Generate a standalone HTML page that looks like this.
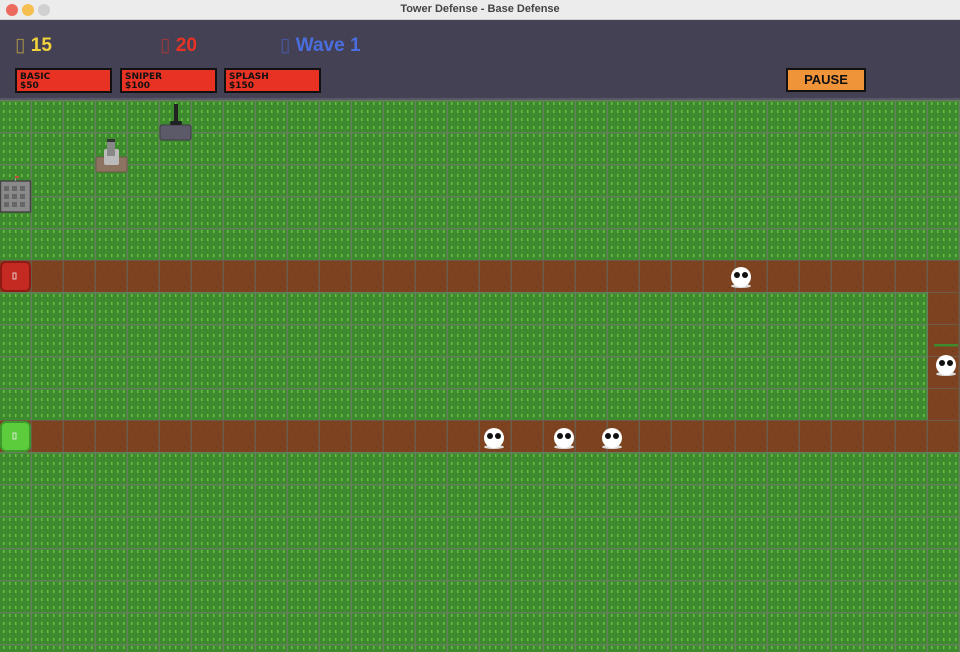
<!DOCTYPE html>
<html><head><meta charset="utf-8"><style>
*{margin:0;padding:0;box-sizing:border-box}
body{width:960px;height:652px;overflow:hidden;background:#3e8a2e;font-family:"Liberation Sans",sans-serif;position:relative}
.tb{position:absolute;left:0;top:0;width:960px;height:20px;background:#ececec;border-bottom:1px solid #d0d0d0;text-align:center;font-size:11px;font-weight:bold;color:#444;line-height:18px}
.dot{position:absolute;top:4px;width:12px;height:12px;border-radius:50%}
.hd{position:absolute;left:0;top:20px;width:960px;height:80px;background:#444154;border-bottom:2px solid #5a5868}
.st{position:absolute;top:14px;font-size:19px;font-weight:bold}
.st i{font-style:normal;opacity:.55;font-weight:normal}
.btn{position:absolute;top:48px;width:97px;height:25px;background:#e83224;border:2px solid #111;font-size:9px;font-weight:bold;line-height:9px;padding:3px 0 0 3px;color:#111;font-family:"DejaVu Sans",sans-serif}
.pause{position:absolute;left:786px;top:48px;width:80px;height:24px;background:#f0943a;border:2px solid #111;font-size:13px;font-weight:bold;text-align:center;line-height:19px;color:#111}
svg{position:absolute;left:0;top:100px}
</style></head><body>
<div class="tb">Tower Defense - Base Defense</div>
<div class="dot" style="left:6px;background:#ed6a5e"></div>
<div class="dot" style="left:22px;background:#f5bf4f"></div>
<div class="dot" style="left:38px;background:#d0d0d0"></div>
<div class="hd">
<div class="st" style="left:15px;color:#f2d23c"><i>▯</i> 15</div>
<div class="st" style="left:160px;color:#e83224"><i>▯</i> 20</div>
<div class="st" style="left:280px;color:#4a6ee0"><i>▯</i> Wave 1</div>
<div class="btn" style="left:15px">BASIC<br>$50</div>
<div class="btn" style="left:120px">SNIPER<br>$100</div>
<div class="btn" style="left:224px">SPLASH<br>$150</div>
<div class="pause">PAUSE</div>
</div>
<svg width="960" height="552" viewBox="0 0 960 552">
<defs>
<pattern id="g" width="32" height="32" patternUnits="userSpaceOnUse">
<rect width="32" height="32" fill="#3e8a2e"/>
<g fill="#64c23e">
<rect x="3" y="2" width="1.5" height="3"/><rect x="9" y="2" width="1.5" height="3"/><rect x="15" y="2" width="1.5" height="3"/><rect x="21" y="2" width="1.5" height="3"/><rect x="27" y="2" width="1.5" height="3"/>
<rect x="3" y="10" width="1.5" height="3"/><rect x="9" y="10" width="1.5" height="3"/><rect x="15" y="10" width="1.5" height="3"/><rect x="21" y="10" width="1.5" height="3"/><rect x="27" y="10" width="1.5" height="3"/>
<rect x="3" y="18" width="1.5" height="3"/><rect x="9" y="18" width="1.5" height="3"/><rect x="15" y="18" width="1.5" height="3"/><rect x="21" y="18" width="1.5" height="3"/><rect x="27" y="18" width="1.5" height="3"/>
<rect x="3" y="26" width="1.5" height="3"/><rect x="9" y="26" width="1.5" height="3"/><rect x="15" y="26" width="1.5" height="3"/><rect x="21" y="26" width="1.5" height="3"/><rect x="27" y="26" width="1.5" height="3"/>
</g>
<rect x="30.5" y="0" width="1.5" height="32" fill="#64805a"/>
<rect x="0" y="0" width="32" height="1.5" fill="#64805a"/>
</pattern>
<pattern id="d" width="32" height="32" patternUnits="userSpaceOnUse">
<rect width="32" height="32" fill="#7d4320"/>
<g fill="#663418"><rect x="4" y="5" width="1" height="1"/><rect x="12" y="9" width="1" height="1"/><rect x="22" y="4" width="1" height="1"/><rect x="7" y="17" width="1" height="1"/><rect x="18" y="21" width="1" height="1"/><rect x="26" y="14" width="1" height="1"/><rect x="10" y="26" width="1" height="1"/><rect x="24" y="27" width="1" height="1"/></g>
<rect x="30.5" y="0" width="1.5" height="32" fill="#6e5a48"/>
<rect x="0" y="0" width="32" height="1" fill="#6e5a48"/>
</pattern>
</defs>
<rect width="960" height="552" fill="url(#g)"/>
<rect x="0" y="160" width="960" height="32" fill="url(#d)"/>
<rect x="928" y="192" width="32" height="128" fill="url(#d)"/>
<rect x="0" y="320" width="960" height="32" fill="url(#d)"/>
<rect x="1" y="162" width="29" height="29" rx="5" fill="#c42a22" stroke="#8e1a14" stroke-width="2"/>
<rect x="1" y="322" width="29" height="29" rx="5" fill="#5ccc3c" stroke="#3d9a2a" stroke-width="2"/>
<rect x="13" y="173" width="3" height="6" fill="none" stroke="#eee" stroke-width="0.8"/>
<rect x="13" y="333" width="3" height="6" fill="none" stroke="#eee" stroke-width="0.8"/>
<rect x="0.5" y="81" width="30" height="31" fill="#8a8a8a" stroke="#444" stroke-width="1.5"/>
<rect x="15" y="76" width="1" height="5" fill="#999"/><rect x="15" y="76" width="4" height="2" fill="#c0523a"/>
<g fill="#666"><rect x="4" y="86" width="5" height="5"/><rect x="12" y="86" width="5" height="5"/><rect x="20" y="86" width="5" height="5"/><rect x="4" y="94" width="5" height="5"/><rect x="12" y="94" width="5" height="5"/><rect x="20" y="94" width="5" height="5"/><rect x="4" y="102" width="5" height="5"/><rect x="12" y="102" width="5" height="5"/><rect x="20" y="102" width="5" height="5"/></g>
<rect x="96" y="57" width="31" height="15" rx="2" fill="#8c7460" stroke="#6e5a48"/>
<rect x="104" y="49" width="15" height="16" rx="2" fill="#bbb"/>
<rect x="107" y="42" width="8" height="14" fill="#888"/><rect x="107" y="39" width="8" height="3" fill="#333"/>
<rect x="160" y="25" width="31" height="15" rx="2" fill="#5c5a68" stroke="#3e3c48"/>
<rect x="174" y="4" width="4" height="20" fill="#222"/><rect x="170" y="21" width="12" height="4" rx="2" fill="#222"/>
<g fill="#fff">
<ellipse cx="741" cy="186" rx="10" ry="2" fill="#ddd"/><circle cx="741" cy="177" r="10"/>
<ellipse cx="946" cy="274" rx="10" ry="2" fill="#ddd"/><circle cx="946" cy="265" r="10"/>
<ellipse cx="494" cy="347" rx="10" ry="2" fill="#ddd"/><circle cx="494" cy="338" r="10"/>
<ellipse cx="564" cy="347" rx="10" ry="2" fill="#ddd"/><circle cx="564" cy="338" r="10"/>
<ellipse cx="612" cy="347" rx="10" ry="2" fill="#ddd"/><circle cx="612" cy="338" r="10"/>
</g>
<g fill="#111">
<circle cx="737" cy="175" r="3"/><circle cx="745" cy="175" r="3"/>
<circle cx="942" cy="263" r="3"/><circle cx="950" cy="263" r="3"/>
<circle cx="490" cy="336" r="3"/><circle cx="498" cy="336" r="3"/>
<circle cx="560" cy="336" r="3"/><circle cx="568" cy="336" r="3"/>
<circle cx="608" cy="336" r="3"/><circle cx="616" cy="336" r="3"/>
</g>
<rect x="934" y="244" width="24" height="2.5" fill="#3e8a2e"/>
</svg>
</body></html>
